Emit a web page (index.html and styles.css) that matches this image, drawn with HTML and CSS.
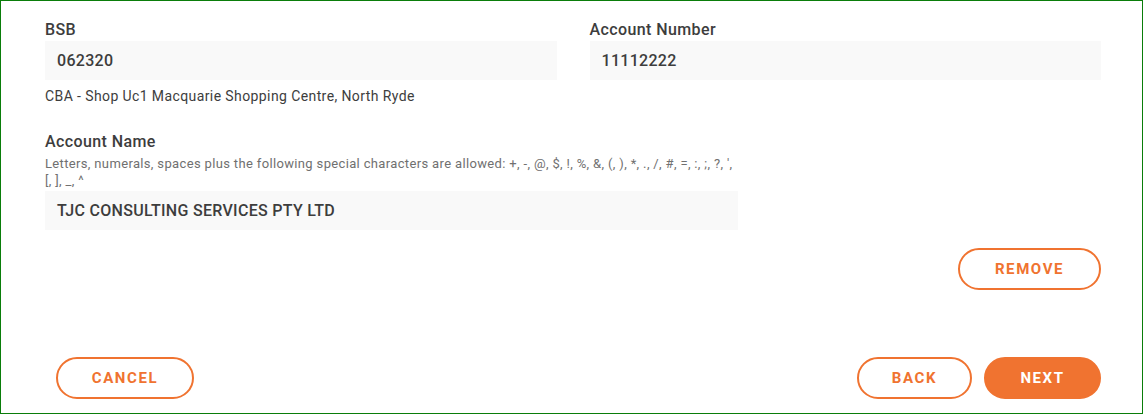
FILE: index.html
```html
<!DOCTYPE html>
<html>
<head>
<meta charset="utf-8">
<link rel="stylesheet" href="styles.css">
</head>
<body>
<div class="frame">
  <div class="row">
    <div class="field">
      <div class="label">BSB</div>
      <div class="input">062320</div>
      <div class="hint">CBA - Shop Uc1 Macquarie Shopping Centre, North Ryde</div>
    </div>
    <div class="field">
      <div class="label">Account Number</div>
      <div class="input">11112222</div>
    </div>
  </div>
  <div class="name-field">
    <div class="label">Account Name</div>
    <div class="help">Letters, numerals, spaces plus the following special characters are allowed: +, -, @, $, !, %, &amp;, (, ), *, ., /, #, =, :, ;, ?, ',<br>[, ], _, ^</div>
    <div class="input name-input">TJC CONSULTING SERVICES PTY LTD</div>
  </div>
  <div class="remove-row">
    <button class="btn outline remove">REMOVE</button>
  </div>
  <div class="footer">
    <button class="btn outline cancel">CANCEL</button>
    <div class="right">
      <button class="btn outline back">BACK</button>
      <button class="btn solid next">NEXT</button>
    </div>
  </div>
</div>
</body>
</html>
```
FILE: styles.css
```css
* { box-sizing: border-box; }
html, body { margin: 0; padding: 0; background: #fff; }
body { font-family: Roboto, "Liberation Sans", sans-serif; color: #3d3d3d; }
.frame {
  width: 1143px;
  height: 414px;
  border: 1px solid #0a7d0a;
  padding: 19px 41px 0 44px;
}
.row { display: flex; gap: 33px; }
.field { flex: 1; }
.label { font-size: 16px; font-weight: 500; letter-spacing: 0.4px; line-height: 20px; height: 21px; }
.input {
  background: #f9f9f9;
  height: 39px;
  line-height: 39px;
  padding-left: 12px;
  font-size: 16px;
  font-weight: 500;
  letter-spacing: 0.3px;
}
.hint { font-size: 14px; letter-spacing: 0.4px; line-height: 16px; margin-top: 8px; }
.name-field { margin-top: 28px; width: 693px; }
.help { font-size: 13px; letter-spacing: 0.35px; color: #707070; line-height: 17px; margin-top: 2px; margin-bottom: 2px; white-space: nowrap; }
.remove-row { display: flex; justify-content: flex-end; margin-top: 18px; }
.btn {
  font-family: inherit;
  font-size: 15px;
  font-weight: 700;
  letter-spacing: 1.6px;
  height: 42px;
  border-radius: 21px;
  border: 2px solid #f07330;
  background: #fff;
  color: #f07330;
  padding: 0;
}
.remove { width: 143px; }
.footer { display: flex; justify-content: space-between; margin-top: 67px; padding-left: 11px; }
.right { display: flex; gap: 12px; }
.cancel { width: 138px; }
.back { width: 115px; }
.next { width: 117px; background: #f07330; color: #fff; }
```
